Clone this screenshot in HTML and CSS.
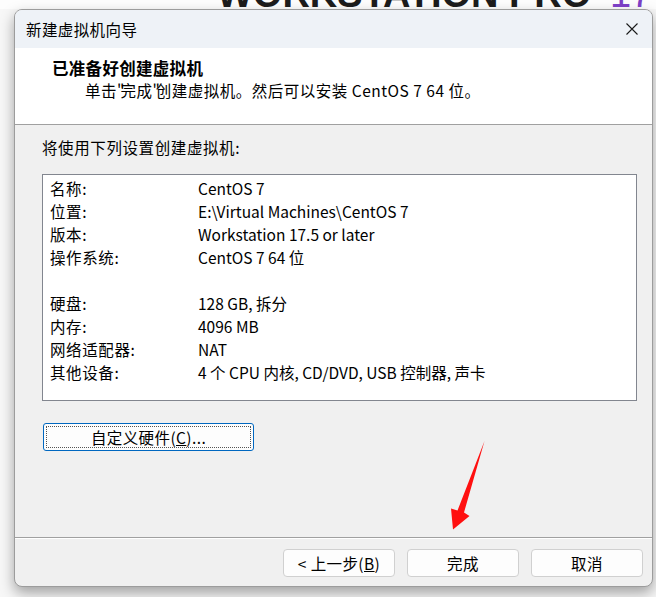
FILE: index.html
```html
<!DOCTYPE html>
<html lang="zh-CN">

<head>
	<meta charset="UTF-8">
	<meta name="viewport" content="width=device-width, initial-scale=1.0">
	<title>新建虚拟机向导</title>
	<link rel="stylesheet" href="styles.css">
</head>

<body>
	<!-- Desktop behind the dialog -->
	<div class="desktop-strip">
		<span class="brand">WORKSTATION PRO <span class="brand-version">17</span></span>
	</div>

	<div class="window">
		<div class="titlebar">
			<span class="title-text">新建虚拟机向导</span>
			<span class="close-btn">
				<svg width="12" height="12" viewBox="0 0 12 12">
					<path d="M0.5 0.5 L11.5 11.5 M11.5 0.5 L0.5 11.5" stroke="#1a1a1a" stroke-width="1.1" fill="none" />
				</svg>
			</span>
		</div>

		<div class="header">
			<div class="header-title">已准备好创建虚拟机</div>
			<div class="header-sub">单击<span class="q">"</span>完成<span class="q">"</span>创建虚拟机。然后可以安装 CentOS 7 64 位。</div>
		</div>

		<div class="content">
			<div class="intro">将使用下列设置创建虚拟机:</div>

			<div class="summary">
				<div class="row"><span class="label">名称:</span><span>CentOS 7</span></div>
				<div class="row"><span class="label">位置:</span><span>E:\Virtual Machines\CentOS 7</span></div>
				<div class="row"><span class="label">版本:</span><span>Workstation 17.5 or later</span></div>
				<div class="row"><span class="label">操作系统:</span><span>CentOS 7 64 位</span></div>
				<div class="row"></div>
				<div class="row"><span class="label">硬盘:</span><span>128 GB, 拆分</span></div>
				<div class="row"><span class="label">内存:</span><span>4096 MB</span></div>
				<div class="row"><span class="label">网络适配器:</span><span>NAT</span></div>
				<div class="row"><span class="label">其他设备:</span><span>4 个 CPU 内核, CD/DVD, USB 控制器, 声卡</span></div>
			</div>

			<button class="hw-btn">自定义硬件(<u>C</u>)...</button>
		</div>

		<div class="footer">
			<button class="btn">&lt; 上一步(<u>B</u>)</button>
			<button class="btn">完成</button>
			<button class="btn">取消</button>
		</div>
	</div>

	<!-- Red annotation arrow -->
	<svg class="annotation" width="656" height="597" viewBox="0 0 656 597">
		<polygon points="484.5,441 464,512.5 469.5,516 453,529.5 451,508.5 457.5,510.5" fill="#ff1010" />
	</svg>
</body>

</html>
```

FILE: styles.css
```css
body {
	margin: 0;
	width: 656px;
	height: 597px;
	overflow: hidden;
	position: relative;
	background-color: #f7f7f7;
	font-family: "Noto Sans CJK SC", sans-serif;
	font-size: 15.5px;
	color: #000;
}

/* Desktop strip */
.desktop-strip {
	height: 9px;
	overflow: hidden;
	padding-left: 217px;
	background-color: #fdfdfd;
}

.brand {
	display: block;
	margin-top: -25px;
	font-family: "Liberation Sans", sans-serif;
	font-weight: bold;
	font-size: 38px;
	line-height: 1;
	color: #1b1b1b;
	white-space: nowrap;
}

.brand-version {
	color: #7b3fc4;
	margin-left: 8px;
	font-weight: normal;
}

/* Dialog window */
.window {
	box-sizing: border-box;
	margin-left: 14px;
	width: 639px;
	height: 578px;
	border: 1px solid #9c9c9c;
	border-radius: 8px;
	overflow: hidden;
	display: flex;
	flex-direction: column;
	background-color: #f0f0f0;
	box-shadow: 0 6px 14px rgba(0, 0, 0, 0.35);
}

.titlebar {
	height: 38px;
	flex-shrink: 0;
	display: flex;
	align-items: center;
	justify-content: space-between;
	padding-left: 11px;
	background-color: #eef2f7;
}

.title-text {
	letter-spacing: 0.4px;
}

.close-btn {
	width: 40px;
	display: flex;
	justify-content: center;
	align-items: center;
}

.header {
	flex-shrink: 0;
	box-sizing: border-box;
	height: 77px;
	padding: 9px 0 0 37px;
	background-color: #fff;
	border-bottom: 1px solid #a0a0a0;
}

.header-title {
	font-weight: bold;
	font-size: 16.5px;
	line-height: 22px;
	letter-spacing: 0.3px;
}

.header-sub {
	padding-left: 33px;
	line-height: 22px;
	letter-spacing: 0.5px;
}

.q {
	letter-spacing: -4px;
}

.content {
	flex: 1;
	padding: 11px 15px 0 27px;
}

.intro {
	line-height: 22px;
	letter-spacing: 0.6px;
}

.summary {
	margin-top: 16px;
	height: 227px;
	box-sizing: border-box;
	border: 1px solid #82868f;
	background-color: #fff;
	padding: 2px 0 0 7px;
}

.row {
	display: flex;
	height: 23px;
	line-height: 23px;
	white-space: nowrap;
}

.label {
	width: 148px;
	flex-shrink: 0;
	letter-spacing: 0.6px;
}

.hw-btn {
	margin: 22px 0 0 1px;
	width: 211px;
	height: 28px;
	font-family: "Noto Sans CJK SC", sans-serif;
	font-size: 15.5px;
	letter-spacing: 0.4px;
	color: #000;
	background-color: #fdfdfd;
	border: 1px solid #0067c0;
	border-radius: 3px;
	outline: 1px dotted #555;
	outline-offset: -4px;
	padding: 0;
}

.footer {
	height: 49px;
	flex-shrink: 0;
	box-sizing: border-box;
	border-top: 1px solid #a0a0a0;
	box-shadow: inset 0 1px #fff;
	display: flex;
	justify-content: flex-end;
	gap: 12px;
	padding: 11px 9px 0 0;
}

.btn {
	width: 112px;
	height: 28px;
	padding: 0;
	font-family: "Noto Sans CJK SC", sans-serif;
	font-size: 15.5px;
	letter-spacing: 0.4px;
	color: #000;
	background-color: #fdfdfd;
	border: 1px solid #d0d0d0;
	border-radius: 4px;
}

.annotation {
	position: absolute;
	left: 0;
	top: 0;
	pointer-events: none;
}
```
